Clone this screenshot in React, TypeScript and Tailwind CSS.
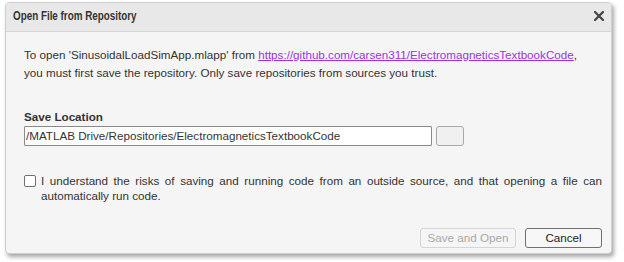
import React from "react";

export default function App() {
  return (
    <div className="w-[624px] h-[262px] bg-white pt-[2px] pl-[5px]" style={{ fontFamily: '"Liberation Sans", Arial, sans-serif' }}>
      <div className="w-[607px] h-[252px] flex flex-col rounded-[4px] border border-[#cfcfcf] bg-[#f5f5f5] shadow-[2px_3px_4px_rgba(0,0,0,0.35)] overflow-hidden">
        <div className="h-[29px] shrink-0 flex items-center justify-between bg-[#e8e8e8] border-b border-[#d6d6d6] pl-[7px] pr-[7px] pb-[2px]">
          <span className="inline-block origin-left scale-x-[0.82] text-[12px] font-bold text-[#333] whitespace-nowrap">Open File from Repository</span>
          <svg width="10" height="10" viewBox="0 0 10 10">
            <path d="M1 1L9 9M9 1L1 9" stroke="#444" strokeWidth="2.2" strokeLinecap="square" />
          </svg>
        </div>
        <div className="flex-1 flex flex-col pl-[18px] pr-[9px] pt-[14px] text-[11.65px] text-[#333] leading-[18px]">
          <p className="whitespace-nowrap">
            To open 'SinusoidalLoadSimApp.mlapp' from{" "}
            <a className="text-[#a030e8] underline">https://github.com/carsen311/ElectromagneticsTextbookCode</a>,
            <br />
            you must first save the repository. Only save repositories from sources you trust.
          </p>
          <div className="mt-[27px] font-bold leading-[16px]">Save Location</div>
          <div className="mt-[1px] flex items-center gap-[4px]">
            <div className="w-[408px] h-[20px] border border-[#8a8a8a] bg-white rounded-[1px] pl-[1px] flex items-center leading-[18px] whitespace-nowrap">
              /MATLAB Drive/Repositories/ElectromagneticsTextbookCode
            </div>
            <div className="w-[28px] h-[20px] border border-[#a9a9a9] bg-[#f0f0f0] rounded-[3px]" />
          </div>
          <div className="mt-[27px] flex items-start gap-[5px]">
            <div className="mt-[2px] w-[12px] h-[12px] border border-[#707070] rounded-[2px] bg-white shrink-0" />
            <p className="w-[561px] leading-[15px] text-justify">
              I understand the risks of saving and running code from an outside source, and that opening a file can automatically run code.
            </p>
          </div>
          <div className="mt-auto mb-[5px] flex justify-end gap-[9px]">
            <div className="w-[96px] h-[20px] border border-[#d4d4d4] rounded-[3px] text-[#a8a8a8] flex items-center justify-center">Save and Open</div>
            <div className="w-[77px] h-[20px] border border-[#6f6f6f] rounded-[3px] bg-[#f7f7f7] text-[#222] flex items-center justify-center">Cancel</div>
          </div>
        </div>
      </div>
    </div>
  );
}
